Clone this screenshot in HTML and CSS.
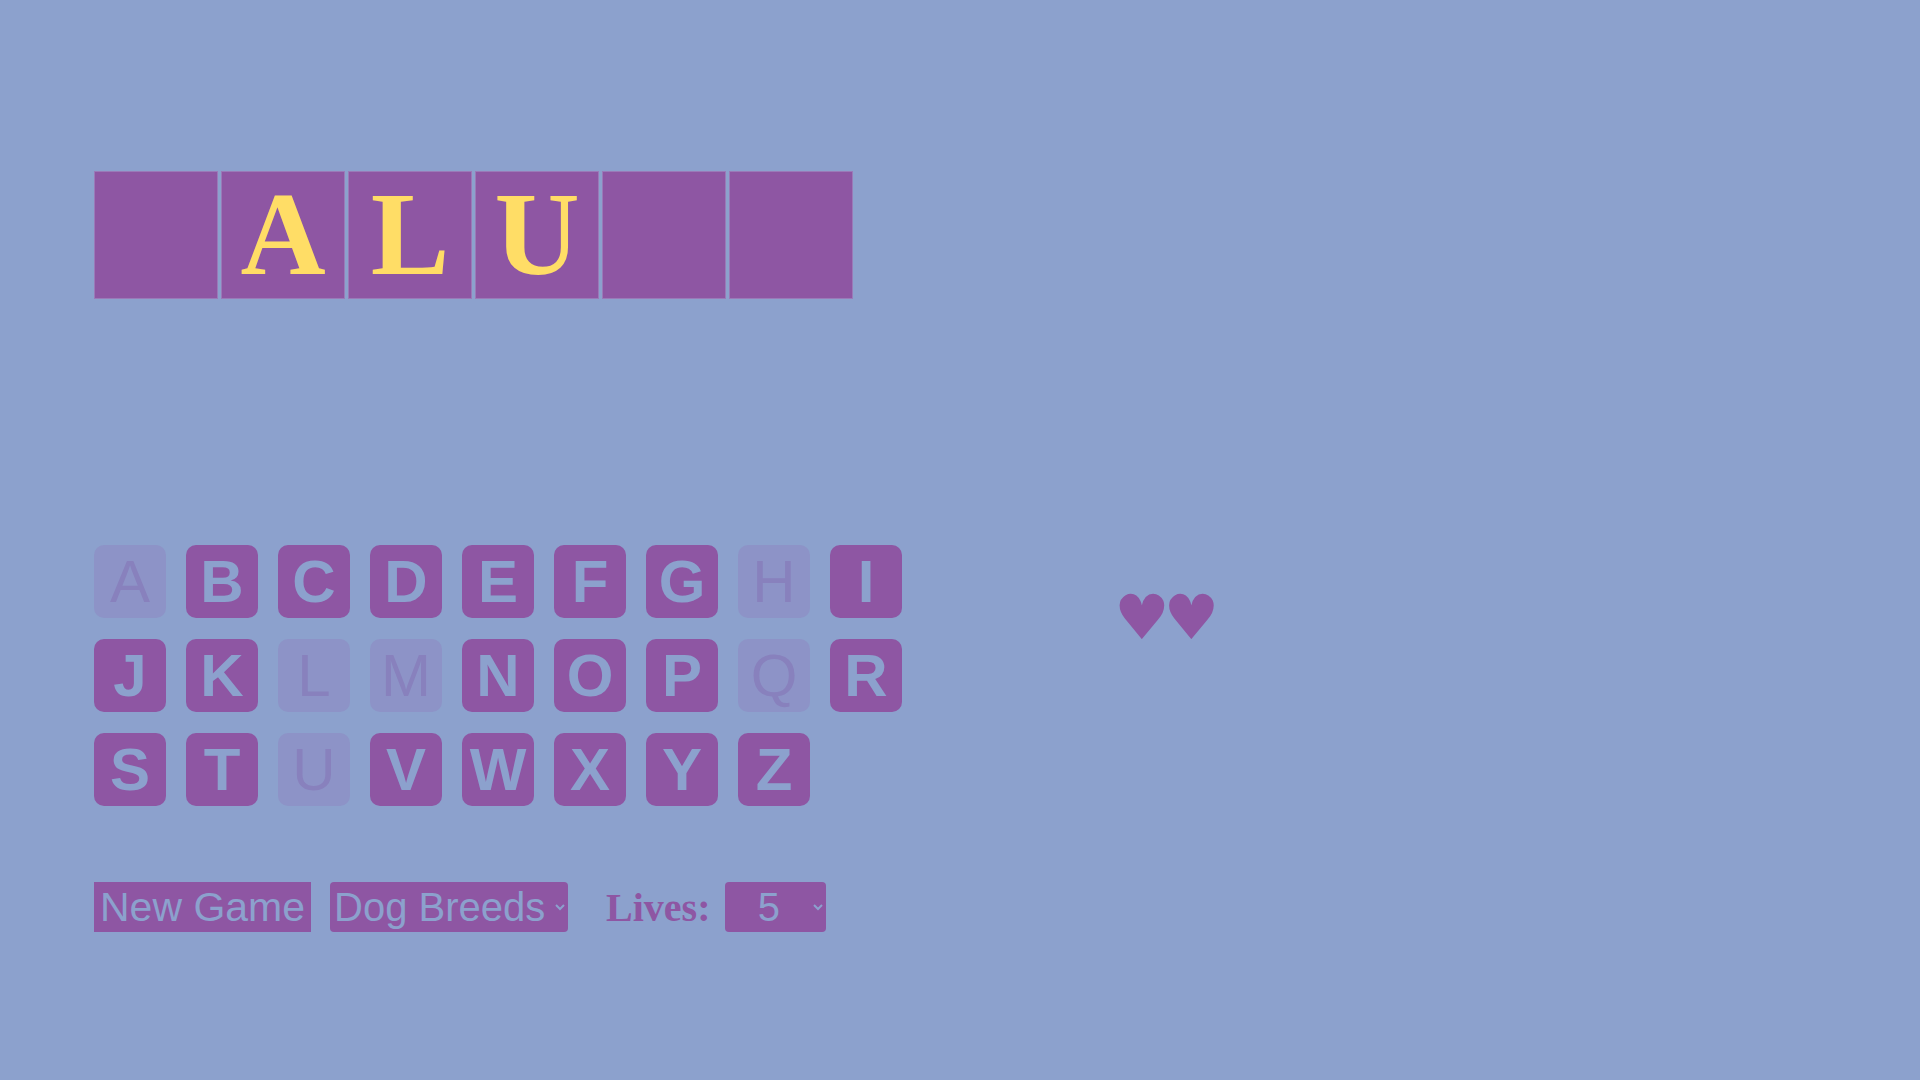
FILE: index.html
```html
<!DOCTYPE html>
<html lang="en">
<head>
<meta charset="utf-8">
<title>Hangman</title>
<link rel="stylesheet" href="styles.css">
</head>
<body>
<main class="game">
  <div class="word">
    <div class="slot"></div>
    <div class="slot">A</div>
    <div class="slot">L</div>
    <div class="slot">U</div>
    <div class="slot"></div>
    <div class="slot"></div>
  </div>
  <div class="middle">
    <div class="keyboard">
      <button class="key used">A</button>
      <button class="key">B</button>
      <button class="key">C</button>
      <button class="key">D</button>
      <button class="key">E</button>
      <button class="key">F</button>
      <button class="key">G</button>
      <button class="key used">H</button>
      <button class="key">I</button>
      <button class="key">J</button>
      <button class="key">K</button>
      <button class="key used">L</button>
      <button class="key used">M</button>
      <button class="key">N</button>
      <button class="key">O</button>
      <button class="key">P</button>
      <button class="key used">Q</button>
      <button class="key">R</button>
      <button class="key">S</button>
      <button class="key">T</button>
      <button class="key used">U</button>
      <button class="key">V</button>
      <button class="key">W</button>
      <button class="key">X</button>
      <button class="key">Y</button>
      <button class="key">Z</button>
    </div>
    <div class="hearts">♥♥</div>
  </div>
  <div class="controls">
    <button class="new-game">New Game</button>
    <select class="category">
      <option>Dog Breeds</option>
    </select>
    <label class="lives-label">Lives:</label>
    <select class="lives">
      <option>&nbsp;&nbsp;5&nbsp;&nbsp;</option>
    </select>
  </div>
</main>
</body>
</html>
```

FILE: styles.css
```css
html, body {
  margin: 0;
  padding: 0;
}

body {
  background: #8ca1cd;
  width: 1920px;
  height: 1080px;
  overflow: hidden;
  font-family: "Liberation Serif", "Times New Roman", serif;
}

.game {
  padding: 171px 0 0 94px;
}

.word {
  display: flex;
  gap: 3px;
}

.slot {
  width: 122px;
  height: 126px;
  border: 1px solid #9a7ab8;
  background: #8e56a3;
  color: #ffdd66;
  font-family: "Liberation Serif", "Times New Roman", serif;
  font-weight: bold;
  font-size: 118px;
  display: flex;
  align-items: center;
  justify-content: center;
  line-height: 1;
}

.middle {
  display: flex;
  align-items: flex-start;
  margin-top: 246px;
}

.keyboard {
  display: grid;
  grid-template-columns: repeat(9, 72px);
  grid-auto-rows: 73px;
  column-gap: 20px;
  row-gap: 21px;
}

.key {
  margin: 0;
  padding: 0;
  border: none;
  border-radius: 10px;
  background: #8e56a3;
  color: #8ca1cd;
  font-family: "Liberation Sans", Arial, sans-serif;
  font-weight: bold;
  font-size: 60px;
  line-height: 1;
  display: flex;
  align-items: center;
  justify-content: center;
}

.key.used {
  background: #8d93c7;
  color: #8881bd;
  font-weight: normal;
}

.hearts {
  margin-left: 212px;
  margin-top: 42px;
  color: #8e56a3;
  font-family: "DejaVu Sans", sans-serif;
  font-size: 62px;
  line-height: 1;
  letter-spacing: -6px;
}

.controls {
  display: flex;
  align-items: center;
  margin-top: 76px;
  height: 50px;
}

.new-game {
  margin: 0;
  height: 50px;
  padding: 0 6px;
  border: none;
  border-radius: 0;
  background: #8e56a3;
  color: #8ca1cd;
  font-family: "Liberation Sans", Arial, sans-serif;
  font-size: 41px;
}

.category,
.lives {
  margin: 0;
  height: 50px;
  border: none;
  border-radius: 4px;
  background-color: #8e56a3;
  color: #8ca1cd;
  font-family: "Liberation Sans", Arial, sans-serif;
  font-size: 40px;
}

.category {
  margin-left: 19px;
  width: 238px;
}

.lives-label {
  margin-left: 38px;
  color: #8e56a3;
  font-family: "Liberation Serif", "Times New Roman", serif;
  font-weight: bold;
  font-size: 40px;
}

.lives {
  margin-left: 14px;
  width: 101px;
  padding-left: 7px;
}
```
